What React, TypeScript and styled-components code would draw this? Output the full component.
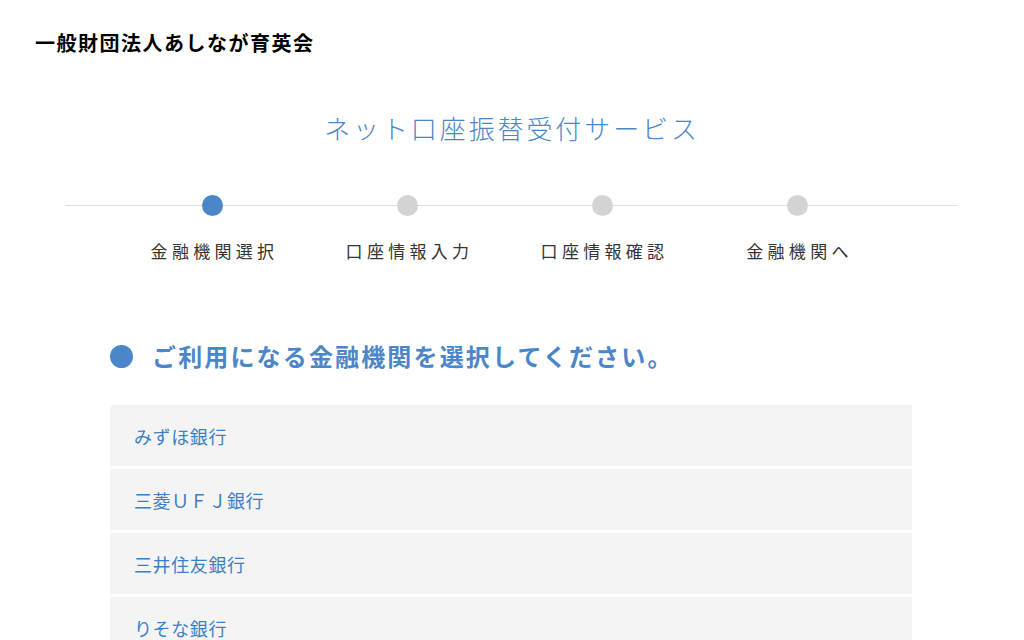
import React from "react";
import styled, { createGlobalStyle } from "styled-components";

const steps = ["金融機関選択", "口座情報入力", "口座情報確認", "金融機関へ"];
const banks = ["みずほ銀行", "三菱ＵＦＪ銀行", "三井住友銀行", "りそな銀行"];

const GlobalStyle = createGlobalStyle`
  html, body {
    margin: 0;
    padding: 0;
    background: #fff;
    font-family: "Noto Sans CJK JP", "Noto Sans", sans-serif;
  }
`;

const Page = styled.div`
  width: 1024px;
  height: 640px;
  overflow: hidden;
`;

const Header = styled.header`
  padding: 28px 0 0 35px;
  height: 50px;
  font-size: 20px;
  font-weight: 700;
  color: #000;
  line-height: 30px;
  letter-spacing: 1.5px;
`;

const Title = styled.h1`
  margin: 32px 0 0;
  text-align: center;
  font-size: 26px;
  font-weight: 300;
  color: #4a86c8;
  letter-spacing: 2.9px;
  line-height: 36px;
  padding-left: 0;
`;

const Stepper = styled.div`
  position: relative;
  margin: 49px 0 0 65px;
  width: 842px;
  padding-left: 50px;
  display: grid;
  grid-template-columns: repeat(4, 195px);

  &::before {
    content: "";
    position: absolute;
    left: 0;
    right: 0;
    top: 10px;
    height: 1px;
    background: #dcdcdc;
  }
`;

const Step = styled.div`
  position: relative;
  display: flex;
  flex-direction: column;
  align-items: center;
`;

const Dot = styled.span<{ $active?: boolean }>`
  width: 21px;
  height: 21px;
  border-radius: 50%;
  background: ${(p) => (p.$active ? "#4a86c8" : "#d3d3d3")};
`;

const StepLabel = styled.span`
  margin-top: 23px;
  font-size: 17px;
  color: #333;
  letter-spacing: 4.3px;
  line-height: 24px;
  padding-left: 4px;
`;

const Section = styled.section`
  margin: 76px 0 0 110px;
  width: 802px;
`;

const Heading = styled.h2`
  margin: 0;
  display: flex;
  align-items: center;
  gap: 19px;
  font-size: 24px;
  font-weight: 700;
  color: #4a86c8;
  letter-spacing: 2.15px;
  line-height: 34px;

  &::before {
    content: "";
    width: 23px;
    height: 23px;
    border-radius: 50%;
    background: #4a86c8;
  }
`;

const BankList = styled.ul`
  list-style: none;
  margin: 32px 0 0;
  padding: 0;
  display: flex;
  flex-direction: column;
  gap: 3px;
`;

const BankRow = styled.li`
  height: 61px;
  background: #f4f4f4;
  display: flex;
  align-items: center;
  padding-left: 24px;
  font-size: 18px;
  color: #3d7fc4;
  letter-spacing: 0.6px;
  cursor: pointer;
`;

export default function App() {
  return (
    <Page>
      <GlobalStyle />
      <Header>一般財団法人あしなが育英会</Header>
      <Title>ネット口座振替受付サービス</Title>
      <Stepper>
        {steps.map((s, i) => (
          <Step key={s}>
            <Dot $active={i === 0} />
            <StepLabel>{s}</StepLabel>
          </Step>
        ))}
      </Stepper>
      <Section>
        <Heading>ご利用になる金融機関を選択してください。</Heading>
        <BankList>
          {banks.map((b) => (
            <BankRow key={b}>{b}</BankRow>
          ))}
        </BankList>
      </Section>
    </Page>
  );
}
